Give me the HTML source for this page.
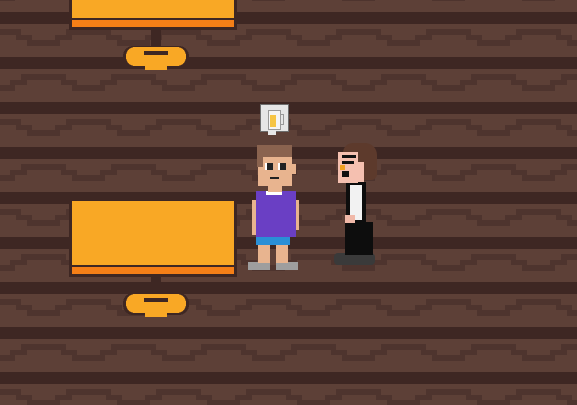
<!DOCTYPE html>
<html><head><style>
html,body{margin:0;padding:0;width:577px;height:405px;overflow:hidden;background:#5d4037}
.a{position:absolute}
</style></head><body>
<svg class="a" style="left:0;top:0" width="577" height="405" shape-rendering="crispEdges">
<defs>
<pattern id="f" x="55" y="12" width="90" height="90" patternUnits="userSpaceOnUse">
<rect width="90" height="90" fill="#5d4037"/>
<rect y="0" width="90" height="12" fill="#3e2723"/>
<rect y="45" width="90" height="12" fill="#3e2723"/>
<g fill="#4e342e">
<rect x="0" y="23" width="17" height="5"/><rect x="11" y="17" width="45" height="6"/><rect x="51" y="23" width="16" height="5"/><rect x="62" y="28" width="28" height="6"/><rect x="0" y="28" width="5" height="6"/>
</g>
<g fill="#4e342e" transform="translate(45,45)">
<rect x="0" y="23" width="17" height="5"/><rect x="11" y="17" width="45" height="6"/><rect x="51" y="23" width="16" height="5"/><rect x="62" y="28" width="28" height="6"/><rect x="0" y="28" width="5" height="6"/>
</g>
<g fill="#4e342e" transform="translate(-45,45)">
<rect x="0" y="23" width="17" height="5"/><rect x="11" y="17" width="45" height="6"/><rect x="51" y="23" width="16" height="5"/><rect x="62" y="28" width="28" height="6"/><rect x="0" y="28" width="5" height="6"/>
</g>
</pattern>
<g id="t">
<rect x="69" y="200" width="168" height="77" fill="#3e2723"/>
<rect x="72" y="201" width="162" height="64" fill="#f9a825"/>
<rect x="72" y="267" width="162" height="7" fill="#f57f17"/>
<rect x="151" y="277" width="10" height="23" fill="#3e2723"/>
<rect x="123" y="293" width="66" height="22" rx="10" fill="#3e2723"/>
<rect x="126" y="294" width="60" height="19" rx="9" fill="#f9a825"/>
<rect x="145" y="312" width="22" height="5" fill="#f9a825"/>
<rect x="144" y="298" width="24" height="4" fill="#3e2723"/>
</g>
</defs>
<rect width="577" height="405" fill="url(#f)"/>
<use href="#t"/>
<use href="#t" transform="translate(0,-247)"/>
</svg>

<!-- bubble -->
<div class="a" style="left:260px;top:104px;width:27px;height:26px;background:#e6e6e6;border:1px solid #6d6d6d"></div>
<div class="a" style="left:268px;top:131px;width:8px;height:4px;background:#e6e6e6"></div>
<div class="a" style="left:268px;top:110px;width:11px;height:18px;background:#f5f5f5;border:1px solid #999"></div>
<div class="a" style="left:270px;top:115px;width:6px;height:12px;background:#f6c545"></div>
<div class="a" style="left:280px;top:114px;width:3px;height:9px;border:1px solid #999;border-left:none"></div>

<!-- boy -->
<div class="a" style="left:248px;top:262px;width:22px;height:8px;background:#9e9e9e"></div>
<div class="a" style="left:276px;top:262px;width:22px;height:8px;background:#9e9e9e"></div>
<div class="a" style="left:258px;top:244px;width:12px;height:19px;background:#e8b48f"></div>
<div class="a" style="left:276px;top:244px;width:12px;height:19px;background:#e8b48f"></div>
<div class="a" style="left:256px;top:235px;width:34px;height:10px;background:#2a8fd6"></div>
<div class="a" style="left:252px;top:200px;width:7px;height:35px;background:#e8b48f"></div>
<div class="a" style="left:289px;top:200px;width:10px;height:30px;background:#e8b48f"></div>
<div class="a" style="left:256px;top:191px;width:40px;height:46px;background:#6a3fc4"></div>
<div class="a" style="left:266px;top:191px;width:16px;height:4px;background:#fff"></div>
<div class="a" style="left:268px;top:184px;width:14px;height:8px;background:#e8b48f"></div>
<div class="a" style="left:258px;top:152px;width:34px;height:34px;background:#e8b48f"></div>
<div class="a" style="left:290px;top:164px;width:6px;height:10px;background:#e8b48f"></div>
<div class="a" style="left:257px;top:145px;width:35px;height:12px;background:#8a634f"></div>
<div class="a" style="left:257px;top:155px;width:6px;height:12px;background:#8a634f"></div>
<div class="a" style="left:265px;top:163px;width:6px;height:7px;background:#222;border-left:2px solid #fff"></div>
<div class="a" style="left:278px;top:163px;width:6px;height:7px;background:#222;border-left:2px solid #fff"></div>
<div class="a" style="left:270px;top:177px;width:9px;height:2px;background:#222"></div>

<!-- waiter -->
<div class="a" style="left:334px;top:253px;width:41px;height:12px;background:#3a3a3a;border-radius:4px"></div>
<div class="a" style="left:345px;top:222px;width:28px;height:33px;background:#0d0d0d"></div>
<div class="a" style="left:346px;top:182px;width:20px;height:42px;background:#0d0d0d"></div>
<div class="a" style="left:350px;top:185px;width:12px;height:35px;background:#f2f2f2"></div>
<div class="a" style="left:345px;top:215px;width:10px;height:8px;background:#f0b8a8"></div>
<div class="a" style="left:343px;top:143px;width:34px;height:37px;background:#5d3a2c;border-radius:10px 12px 6px 4px"></div>
<div class="a" style="left:338px;top:152px;width:20px;height:31px;background:#f5c0b0"></div>
<div class="a" style="left:358px;top:162px;width:6px;height:20px;background:#f5c0b0"></div>
<div class="a" style="left:342px;top:155px;width:14px;height:3px;background:#111"></div>
<div class="a" style="left:342px;top:161px;width:12px;height:3px;background:#111"></div>
<div class="a" style="left:340px;top:165px;width:5px;height:5px;background:#f0a020"></div>
<div class="a" style="left:342px;top:171px;width:7px;height:6px;background:#111"></div>
</body></html>
